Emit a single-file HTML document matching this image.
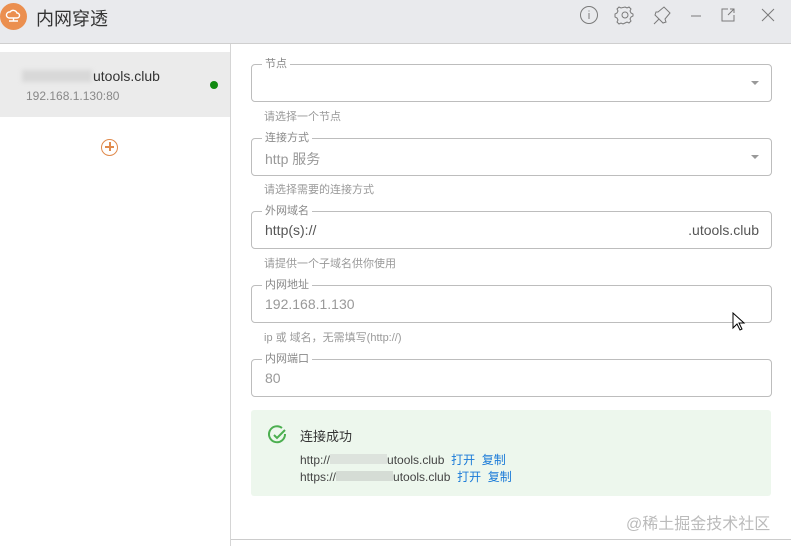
<html><head><style>
body{margin:0;width:791px;height:546px;background:#fff;font-family:"Liberation Sans","Noto Sans CJK SC",sans-serif;position:relative;overflow:hidden}
.a{position:absolute}
.box{position:absolute;left:251px;width:519px;height:36px;border:1px solid #bdbdbd;border-radius:4px}
.lab{position:absolute;left:10px;top:-8px;background:#fff;padding:0 3px;font-size:11px;color:#888;line-height:14px}
.val{position:absolute;left:13px;top:10px;font-size:14px;color:#999}
.help{position:absolute;left:264px;font-size:11px;color:#999}
.arr{position:absolute;right:12px;top:16px;border:4px solid transparent;border-top:4px solid #999}
</style></head><body>
<div class="a" style="left:0;top:0;width:791px;height:43px;background:#e9eaed;border-bottom:1px solid #cfcfcf"></div>
<div class="a" style="left:0;top:3px;width:27px;height:27px;border-radius:50%;background:#eb8f4f"></div>
<svg class="a" style="left:5px;top:8px" width="17" height="17" viewBox="0 0 17 17"><path d="M4 10a3 3 0 0 1 1-6 4 4 0 0 1 7 1 2.5 2.5 0 0 1 0 5z" fill="none" stroke="#fff" stroke-width="1.4"/><path d="M8.5 10v3M4 13h9" stroke="#fff" stroke-width="1.4"/></svg>
<div class="a" style="left:36px;top:5px;font-size:18px;color:#333">内网穿透</div>
<svg class="a" style="left:578px;top:5px" width="200" height="22" viewBox="0 0 200 22" fill="none" stroke="#7a7a7a" stroke-width="1">
<circle cx="11" cy="10" r="8.5"/><path d="M11 8v6M11 5.5v1"/>
<circle cx="47" cy="10" r="3"/><path d="M47 2l2 1 2-1 2 2-1 2 1 2 2 1v2l-2 1-1 2 1 2-2 2-2-1-2 1-2 1-2-1-2 1-2-2 1-2-1-2-2-1V9l2-1 1-2-1-2 2-2 2 1z"/>
<path d="M76 19l5-5M80 7l6-5 6 6-5 6 1 3-3 1-8-8 1-3z"/>
<path d="M113 11h10"/>
<path d="M150 4h-6v12h12v-6M152 4h4v4M156 4l-6 6"/>
<path d="M184 4l12 12M196 4l-12 12"/></svg>
<div class="a" style="left:230px;top:44px;width:1px;height:502px;background:#d5d5d5"></div>
<div class="a" style="left:0;top:52px;width:230px;height:65px;background:#ebebeb"></div>
<div class="a" style="left:22px;top:70px;width:70px;height:12px;background:#d8d8d8;filter:blur(2px)"></div>
<div class="a" style="left:93px;top:68px;font-size:14px;color:#333">utools.club</div>
<div class="a" style="left:26px;top:89px;font-size:12px;color:#888">192.168.1.130:80</div>
<div class="a" style="left:210px;top:81px;width:8px;height:8px;border-radius:50%;background:#118a11"></div>
<div class="a" style="left:101px;top:139px;width:15px;height:15px;border:1.5px solid #e08a4c;border-radius:50%"></div>
<div class="a" style="left:105px;top:146px;width:9px;height:1.5px;background:#e08a4c"></div>
<div class="a" style="left:109px;top:142px;width:1.5px;height:9px;background:#e08a4c"></div>

<div class="box" style="top:64px"><div class="lab">节点</div><div class="arr"></div></div>
<div class="help" style="top:108px">请选择一个节点</div>
<div class="box" style="top:138px"><div class="lab">连接方式</div><div class="val">http 服务</div><div class="arr"></div></div>
<div class="help" style="top:181px">请选择需要的连接方式</div>
<div class="box" style="top:211px"><div class="lab">外网域名</div><div class="val" style="color:#555">http(s)://</div><div class="val" style="left:auto;right:12px;color:#555">.utools.club</div></div>
<div class="help" style="top:255px">请提供一个子域名供你使用</div>
<div class="box" style="top:285px"><div class="lab">内网地址</div><div class="val">192.168.1.130</div></div>
<div class="help" style="top:329px">ip 或 域名，无需填写(http://)</div>
<div class="box" style="top:359px"><div class="lab">内网端口</div><div class="val">80</div></div>
<svg class="a" style="left:732px;top:312px" width="14" height="20" viewBox="0 0 14 20"><path d="M1 1v15l4-4 3 6 2-1-3-6h5z" fill="#fff" stroke="#000"/></svg>

<div class="a" style="left:251px;top:410px;width:520px;height:86px;background:#edf7ed;border-radius:3px"></div>
<svg class="a" style="left:268px;top:425px" width="20" height="20" viewBox="0 0 20 20" fill="none" stroke="#4caf50" stroke-width="2"><path d="M17 9a8 8 0 1 1-3-6"/><path d="M6 10l3 3 8-8"/></svg>
<div class="a" style="left:300px;top:426px;font-size:13px;color:#333">连接成功</div>
<div class="a" style="left:300px;top:451px;font-size:12px;color:#444">http://<span style="display:inline-block;width:57px;height:10px;background:#dde3dd"></span>utools.club &nbsp;<span style="color:#1a7ad8">打开 &nbsp;复制</span></div>
<div class="a" style="left:300px;top:468px;font-size:12px;color:#444">https://<span style="display:inline-block;width:57px;height:10px;background:#d5dcd5"></span>utools.club &nbsp;<span style="color:#1a7ad8">打开 &nbsp;复制</span></div>
<div class="a" style="left:231px;top:539px;width:560px;height:1px;background:#ccc"></div>
<div class="a" style="left:626px;top:510px;font-size:16px;color:#bbb">@稀土掘金技术社区</div>
</body></html>
